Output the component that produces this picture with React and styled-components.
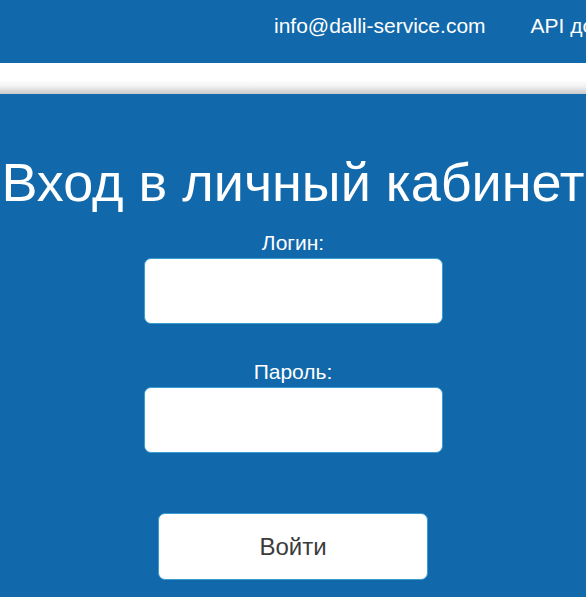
import React from 'react';
import styled, { createGlobalStyle } from 'styled-components';

const Global = createGlobalStyle`
  html, body {
    margin: 0;
    padding: 0;
    background: #1168aa;
    font-family: "Liberation Sans", Arial, sans-serif;
  }
`;

const Header = styled.header`
  height: 63px;
  background: #1168aa;
  display: flex;
  align-items: center;
  padding-left: 274px;
  gap: 45px;
  white-space: nowrap;
  overflow: hidden;
`;

const NavLink = styled.a`
  color: #fff;
  font-size: 21px;
  text-decoration: none;
  margin-bottom: 12px;
`;

const Band = styled.div`
  height: 31px;
  background: linear-gradient(to bottom, #fff 0%, #fff 55%, #f2f2f2 75%, #c9c9c9 100%);
`;

const Main = styled.main`
  background: #1168aa;
  display: flex;
  flex-direction: column;
  align-items: center;
  padding-top: 53px;
  min-height: 500px;
  overflow: hidden;
`;

const Title = styled.h1`
  margin: 0 0 14px;
  color: #fff;
  font-weight: 400;
  font-size: 54px;
  line-height: 70px;
  white-space: nowrap;
`;

const Form = styled.form`
  display: flex;
  flex-direction: column;
  align-items: center;
`;

const Label = styled.label`
  color: #fff;
  font-size: 21px;
  line-height: 24px;
  margin-bottom: 3px;
`;

const Input = styled.input`
  box-sizing: border-box;
  width: 299px;
  height: 66px;
  border: 1px solid #3a9ccf;
  border-radius: 7px;
  background: #fff;
  margin-bottom: ${p => p.$gap}px;
`;

const Button = styled.button`
  box-sizing: border-box;
  width: 270px;
  height: 67px;
  border: 1px solid #3a9ccf;
  border-radius: 7px;
  background: #fff;
  color: #3b3b3b;
  font-family: "Liberation Sans", Arial, sans-serif;
  font-size: 24px;
  cursor: pointer;
`;

export default function App() {
  return (
    <>
      <Global />
      <Header>
        <NavLink href="#">info@dalli-service.com</NavLink>
        <NavLink href="#">API документация</NavLink>
      </Header>
      <Band />
      <Main>
        <Title>Вход в личный кабинет</Title>
        <Form onSubmit={e => e.preventDefault()}>
          <Label>Логин:</Label>
          <Input type="text" $gap={36} />
          <Label>Пароль:</Label>
          <Input type="password" $gap={60} />
          <Button type="submit">Войти</Button>
        </Form>
      </Main>
    </>
  );
}
